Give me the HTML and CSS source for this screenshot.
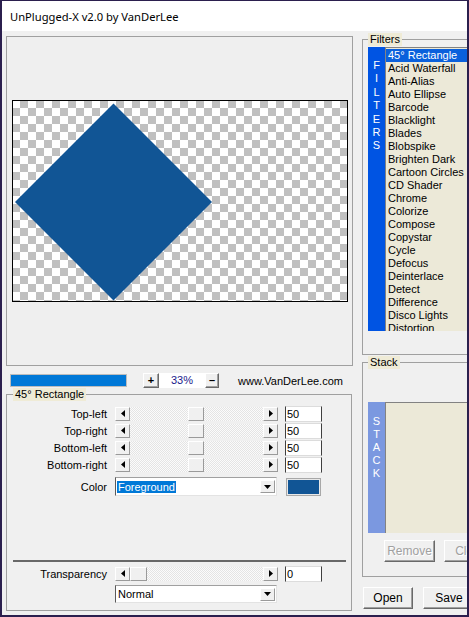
FILE: index.html
```html
<!DOCTYPE html>
<html>
<head>
<meta charset="utf-8">
<title>UnPlugged-X v2.0 by VanDerLee</title>
<link rel="stylesheet" href="styles.css">
</head>
<body>
<div class="window">
  <div class="titlebar">UnPlugged-X v2.0 by VanDerLee</div>
  <div class="client">
    <div class="leftcol">
      <div class="preview">
        <div class="canvas">
          <svg class="diamond" viewBox="0 0 334 200" width="334" height="200"><polygon points="100.5,2.5 199,101 100.5,199.5 2,101" fill="#115595"/></svg>
        </div>
      </div>
      <div class="zoomrow">
        <div class="progress"></div>
        <div class="sbtn plus">+</div>
        <div class="zoomval">33%</div>
        <div class="sbtn minus">–</div>
        <div class="url">www.VanDerLee.com</div>
      </div>
      <fieldset class="group params">
        <legend>45° Rectangle</legend>
        <div class="rows">
          <div class="prow">
            <div class="plabel">Top-left</div>
            <div class="slider">
              <div class="arrow"><svg width="4" height="7" viewBox="0 0 4 7"><polygon points="4,0 4,7 0,3.5" fill="#000"/></svg></div>
              <div class="track"><div class="thumb mid"></div></div>
              <div class="arrow"><svg width="4" height="7" viewBox="0 0 4 7"><polygon points="0,0 0,7 4,3.5" fill="#000"/></svg></div>
            </div>
            <div class="edit">50</div>
          </div>
          <div class="prow">
            <div class="plabel">Top-right</div>
            <div class="slider">
              <div class="arrow"><svg width="4" height="7" viewBox="0 0 4 7"><polygon points="4,0 4,7 0,3.5" fill="#000"/></svg></div>
              <div class="track"><div class="thumb mid"></div></div>
              <div class="arrow"><svg width="4" height="7" viewBox="0 0 4 7"><polygon points="0,0 0,7 4,3.5" fill="#000"/></svg></div>
            </div>
            <div class="edit">50</div>
          </div>
          <div class="prow">
            <div class="plabel">Bottom-left</div>
            <div class="slider">
              <div class="arrow"><svg width="4" height="7" viewBox="0 0 4 7"><polygon points="4,0 4,7 0,3.5" fill="#000"/></svg></div>
              <div class="track"><div class="thumb mid"></div></div>
              <div class="arrow"><svg width="4" height="7" viewBox="0 0 4 7"><polygon points="0,0 0,7 4,3.5" fill="#000"/></svg></div>
            </div>
            <div class="edit">50</div>
          </div>
          <div class="prow">
            <div class="plabel">Bottom-right</div>
            <div class="slider">
              <div class="arrow"><svg width="4" height="7" viewBox="0 0 4 7"><polygon points="4,0 4,7 0,3.5" fill="#000"/></svg></div>
              <div class="track"><div class="thumb mid"></div></div>
              <div class="arrow"><svg width="4" height="7" viewBox="0 0 4 7"><polygon points="0,0 0,7 4,3.5" fill="#000"/></svg></div>
            </div>
            <div class="edit">50</div>
          </div>
          <div class="prow colorrow">
            <div class="plabel">Color</div>
            <div class="combo">
              <span class="sel">Foreground</span>
              <div class="dd"><svg width="7" height="4" viewBox="0 0 7 4"><polygon points="0,0 7,0 3.5,4" fill="#000"/></svg></div>
            </div>
            <div class="swatch"></div>
          </div>
        </div>
        <div class="sep"></div>
        <div class="prow transrow">
          <div class="plabel">Transparency</div>
          <div class="slider">
            <div class="arrow"><svg width="4" height="7" viewBox="0 0 4 7"><polygon points="4,0 4,7 0,3.5" fill="#000"/></svg></div>
            <div class="track"><div class="thumb start"></div></div>
            <div class="arrow"><svg width="4" height="7" viewBox="0 0 4 7"><polygon points="0,0 0,7 4,3.5" fill="#000"/></svg></div>
          </div>
          <div class="edit">0</div>
        </div>
        <div class="prow moderow">
          <div class="plabel"></div>
          <div class="combo">
            <span class="val">Normal</span>
            <div class="dd"><svg width="7" height="4" viewBox="0 0 7 4"><polygon points="0,0 7,0 3.5,4" fill="#000"/></svg></div>
          </div>
        </div>
      </fieldset>
    </div>

    <div class="rightcol">
      <fieldset class="group filters">
        <legend>Filters</legend>
        <div class="listwrap">
          <div class="vbar fbar"><span>F</span><span>I</span><span>L</span><span>T</span><span>E</span><span>R</span><span>S</span></div>
          <ul class="list">
            <li class="active">45° Rectangle</li>
            <li>Acid Waterfall</li>
            <li>Anti-Alias</li>
            <li>Auto Ellipse</li>
            <li>Barcode</li>
            <li>Blacklight</li>
            <li>Blades</li>
            <li>Blobspike</li>
            <li>Brighten Dark</li>
            <li>Cartoon Circles</li>
            <li>CD Shader</li>
            <li>Chrome</li>
            <li>Colorize</li>
            <li>Compose</li>
            <li>Copystar</li>
            <li>Cycle</li>
            <li>Defocus</li>
            <li>Deinterlace</li>
            <li>Detect</li>
            <li>Difference</li>
            <li>Disco Lights</li>
            <li>Distortion</li>
          </ul>
        </div>
      </fieldset>
      <fieldset class="group stack">
        <legend>Stack</legend>
        <div class="listwrap stackwrap">
          <div class="vbar sbar"><span>S</span><span>T</span><span>A</span><span>C</span><span>K</span></div>
          <div class="list stacklist"></div>
        </div>
        <div class="stackbtns">
          <div class="btn disabled remove">Remove</div>
          <div class="btn disabled clear">Clear</div>
        </div>
      </fieldset>
      <div class="bottombtns">
        <div class="btn open">Open</div>
        <div class="btn save">Save</div>
      </div>
    </div>
  </div>
</div>
</body>
</html>
```

FILE: styles.css
```css
* { box-sizing: border-box; }
html, body { margin: 0; padding: 0; }
body {
  font-family: "Liberation Sans", Arial, sans-serif;
  font-size: 11px;
  color: #000;
  background: #fff;
}
.window {
  width: 469px;
  height: 617px;
  border: 2px solid #2b1f4e;
  border-top-width: 1px;
  overflow: hidden;
  background: #f0f0f0;
}
.titlebar {
  height: 30px;
  background: #fff;
  padding-left: 8px;
  padding-top: 1px;
  font-family: "Noto Sans", "Liberation Sans", sans-serif;
  font-size: 11.2px;
  line-height: 30px;
  white-space: nowrap;
}
.client {
  display: grid;
  grid-template-columns: 347px 150px;
  column-gap: 9px;
  padding: 2px 0 0 4px;
}
.leftcol { display: flex; flex-direction: column; padding-top: 3px; }

.preview {
  height: 330px;
  border: 1px solid #a0a0a0;
  background: #efefef;
  display: flex;
  align-items: center;
  padding-left: 5px;
}
.canvas {
  width: 336px;
  height: 202px;
  border: 1px solid #000;
  background: repeating-conic-gradient(#c0c0c0 0 25%, #fff 0 50%) 0 0 / 16px 16px;
  background-origin: border-box;
}
.diamond { display: block; }

.zoomrow {
  display: flex;
  align-items: center;
  height: 15px;
  margin-top: 7px;
}
.progress {
  width: 117px;
  height: 13px;
  margin-left: 4px;
  background: #0078d7;
  border: 1px solid #bcbcbc;
}
.sbtn {
  height: 15px;
  background: #f0f0f0;
  border: 1px solid;
  border-color: #fff #696969 #696969 #fff;
  box-shadow: inset -1px -1px #a0a0a0;
  display: flex;
  align-items: center;
  justify-content: center;
  font-weight: bold;
  font-size: 11px;
  line-height: 1;
}
.plus { width: 16px; margin-left: 16px; }
.minus { width: 14px; }
.zoomval {
  width: 46px;
  height: 15px;
  background: #fff;
  color: #1a1a8c;
  text-align: center;
  line-height: 15px;
}
.url { margin-left: 19px; white-space: nowrap; }

.group {
  margin: 0;
  padding: 0;
  border: 1px solid #a0a0a0;
  min-width: 0;
}
.group legend {
  padding: 0 2px;
  margin-left: 6px;
  line-height: 13px;
  background: #efebd6;
  font-size: 11px;
}
.params {
  width: 346px;
  height: 223px;
}
.rows { margin-top: 4px; }
.prow {
  display: flex;
  align-items: center;
  height: 17px;
}
.plabel {
  width: 100px;
  margin-right: 8px;
  text-align: right;
  white-space: nowrap;
}
.slider {
  width: 163px;
  height: 14px;
  display: flex;
}
.arrow {
  width: 15px;
  height: 14px;
  background: #f0f0f0;
  border: 1px solid;
  border-color: #fff #9a9a9a #9a9a9a #fff;
  display: flex;
  align-items: center;
  justify-content: center;
}
.arrow svg { display: block; }
.track {
  flex: 1;
  height: 14px;
  background: repeating-conic-gradient(#e4e4e4 0 25%, #fbfbfb 0 50%) 0 0 / 2px 2px;
  display: flex;
}
.thumb {
  width: 16px;
  height: 14px;
  background: #f0f0f0;
  border: 1px solid;
  border-color: #fff #9a9a9a #9a9a9a #fff;
}
.thumb.mid { margin-left: 58px; }
.thumb.start { margin-left: 0; width: 17px; }
.edit {
  width: 37px;
  height: 16px;
  margin-left: 7px;
  background: #fff;
  border: 1px solid;
  border-color: #dcdcdc #404040 #dcdcdc #404040;
  padding-left: 1px;
  line-height: 14px;
}

.colorrow { height: 19px; margin-top: 4px; }
.combo {
  width: 162px;
  height: 19px;
  background: #fff;
  border: 1px solid;
  border-color: #a0a0a0 #e3e3e3 #e3e3e3 #5a5a5a;
  display: flex;
  align-items: center;
  padding-left: 1px;
}
.combo .sel {
  background: #0078d7;
  color: #fff;
  line-height: 12px;
  padding: 0 1px;
}
.combo .val { padding-left: 1px; }
.combo .dd {
  margin-left: auto;
  margin-right: 1px;
  width: 15px;
  height: 13px;
  background: #f0f0f0;
  border: 1px solid;
  border-color: #fff #9a9a9a #9a9a9a #fff;
  display: flex;
  align-items: center;
  justify-content: center;
}
.combo .dd svg { display: block; }
.swatch {
  width: 35px;
  height: 18px;
  margin-left: 9px;
  background: #115595;
  border: 1px solid #a8a8a8;
  box-shadow: inset 0 0 0 1px #e8e8e8;
}
.sep {
  height: 2px;
  width: 333px;
  margin: 64px 0 0 6px;
  background: #686868;
}
.transrow { margin-top: 3px; }
.moderow { margin-top: 3px; height: 18px; }
.moderow .combo { height: 18px; }

.rightcol { display: flex; flex-direction: column; }
.filters {
  width: 150px;
  height: 322px;
  padding: 1px 0 0 5px;
}
.filters legend { margin-left: 0; }
.listwrap {
  display: flex;
  height: 284px;
}
.vbar {
  width: 17px;
  display: flex;
  flex-direction: column;
  align-items: center;
  color: #fff;
  font-size: 11px;
}
.fbar {
  background: #0054e3;
  height: 284px;
  padding-top: 12px;
}
.fbar span { line-height: 13.4px; }
.list {
  list-style: none;
  margin: 0;
  padding: 1px 0 0 0;
  flex: 1;
  height: 284px;
  background: #ece9d8;
  border-top: 1px solid #828282;
  border-left: 1px solid #828282;
  overflow: hidden;
}
.list li {
  line-height: 13px;
  height: 13px;
  padding-left: 2px;
  white-space: nowrap;
}
.list li.active { background: #0a60dc; color: #fff; }

.stack {
  width: 150px;
  height: 221px;
  margin-top: 1px;
  padding: 33px 0 0 5px;
}
.stack legend { margin-left: 0; }
.stackwrap { height: 131px; }
.sbar {
  background: #7b98e0;
  height: 131px;
  padding-top: 13px;
}
.sbar span { line-height: 13px; }
.stacklist { height: 131px; }

.btn {
  height: 22px;
  background: #f0f0f0;
  border: 1px solid;
  border-color: #fff #696969 #696969 #fff;
  box-shadow: inset -1px -1px #a0a0a0;
  display: flex;
  align-items: center;
  justify-content: center;
  font-size: 12px;
}
.btn.disabled { color: #a0a0a0; text-shadow: 1px 1px #fff; }
.stackbtns { display: flex; margin-top: 7px; margin-left: 16px; }
.remove { width: 51px; }
.clear { width: 51px; margin-left: 9px; }
.bottombtns { display: flex; margin-top: 10px; margin-left: 1px; }
.open { width: 50px; }
.save { width: 52px; margin-left: 10px; }
```
